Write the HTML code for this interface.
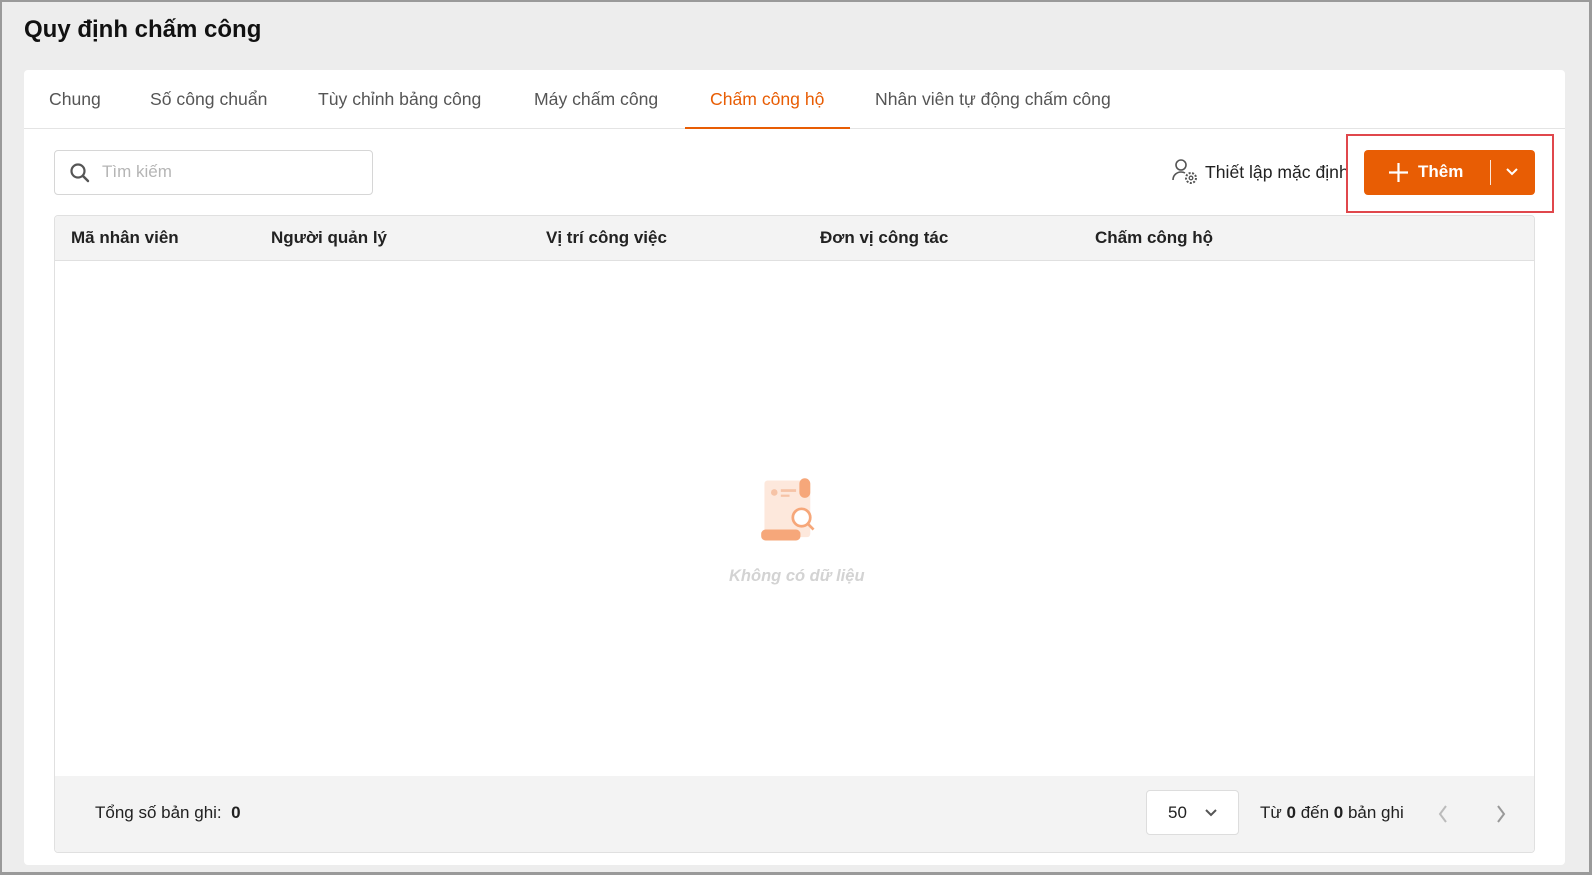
<!DOCTYPE html>
<html><head><meta charset="utf-8"><style>
*{box-sizing:border-box;margin:0;padding:0}
body{width:1592px;height:875px;overflow:hidden;background:#ededed;font-family:"Liberation Sans",sans-serif;color:#212121;position:relative}
.frame{position:absolute;left:0;top:0;width:1592px;height:875px;border:2px solid #9a9a9a;border-right-width:3px;border-bottom-width:3px}
.abs{position:absolute;white-space:nowrap}
.title{left:24px;top:16px;font-size:24px;font-weight:bold;color:#111}
.panel{position:absolute;left:24px;top:70px;width:1541px;height:795px;background:#fff;border-radius:4px}
.tabline{position:absolute;left:24px;top:128px;width:1541px;height:1px;background:#e4e4e4}
.tab{font-size:17.6px;color:#555;top:89px}
.search{position:absolute;left:54px;top:150px;width:319px;height:45px;border:1px solid #d6d6d6;border-radius:4px}
.btn{position:absolute;left:1364px;top:150px;width:171px;height:45px;background:#e85d04;border-radius:4px;color:#fff}
.red{position:absolute;left:1346px;top:134px;width:208px;height:79px;border:2px solid #e0474c}
.table{position:absolute;left:54px;top:215px;width:1481px;height:638px;border:1px solid #e0e0e0;border-radius:4px;overflow:hidden;background:#fff}
.th{position:absolute;top:0;left:0;right:0;height:45px;background:#f3f3f3;border-bottom:1px solid #e0e0e0}
.th span{position:absolute;top:12px;font-size:17px;font-weight:bold;color:#222}
.foot{position:absolute;left:0;right:0;bottom:0;height:76px;background:#f3f3f3}
</style></head><body>
<div class="frame"></div>
<div class="abs title">Quy định chấm công</div>
<div class="panel"></div>
<div class="tabline"></div>
<div class="abs tab" style="left:49px">Chung</div>
<div class="abs tab" style="left:150px">Số công chuẩn</div>
<div class="abs tab" style="left:318px">Tùy chỉnh bảng công</div>
<div class="abs tab" style="left:534px">Máy chấm công</div>
<div class="abs tab" style="left:710px;color:#e85d04">Chấm công hộ</div>
<div class="abs" style="left:685px;top:127px;width:165px;height:2px;background:#e85d04"></div>
<div class="abs tab" style="left:875px">Nhân viên tự động chấm công</div>

<div class="search">
<svg style="position:absolute;left:14px;top:11px" width="22" height="22" viewBox="0 0 22 22"><circle cx="9" cy="9" r="6.5" fill="none" stroke="#555" stroke-width="2.2"/><path d="M14 14l5 5" stroke="#555" stroke-width="2.4" stroke-linecap="round"/></svg>
<div class="abs" style="left:47px;top:11px;font-size:17px;color:#b5b5b5">Tìm kiếm</div>
</div>

<svg class="abs" style="left:1171px;top:158px" width="30" height="28" viewBox="0 0 30 28"><circle cx="10" cy="7" r="5" fill="none" stroke="#555" stroke-width="1.6"/><path d="M2 22c0-5 4-8 8-8 2 0 3 .4 4 1" fill="none" stroke="#555" stroke-width="1.6"/><circle cx="20" cy="20" r="5" fill="none" stroke="#555" stroke-width="2" stroke-dasharray="2 1.5"/><circle cx="20" cy="20" r="1.8" fill="none" stroke="#555" stroke-width="1.3"/></svg>
<div class="abs" style="left:1205px;top:162px;font-size:17.6px;color:#222">Thiết lập mặc định</div>

<div class="btn">
<svg style="position:absolute;left:24px;top:12px" width="21" height="21" viewBox="0 0 21 21"><path d="M10.5 1v19M1 10.5h19" stroke="#fff" stroke-width="2.2"/></svg>
<div class="abs" style="left:54px;top:12px;font-size:17px;font-weight:bold">Thêm</div>
<div class="abs" style="left:126px;top:10px;width:1px;height:25px;background:#fff;opacity:.85"></div>
<svg style="position:absolute;left:141px;top:16px" width="14" height="12" viewBox="0 0 14 12"><path d="M2 3l5 5 5-5" fill="none" stroke="#fff" stroke-width="2"/></svg>
</div>
<div class="red"></div>

<div class="table">
<div class="th"><span style="left:16px">Mã nhân viên</span><span style="left:216px">Người quản lý</span><span style="left:491px">Vị trí công việc</span><span style="left:765px">Đơn vị công tác</span><span style="left:1040px">Chấm công hộ</span></div>
<svg style="position:absolute;left:704px;top:259px" width="72" height="72" viewBox="0 0 66 66"><rect x="5" y="5" width="42" height="52" rx="3" fill="#fde8dc"/><rect x="37" y="3" width="10" height="18" rx="5" fill="#f6a77a"/><circle cx="14" cy="16" r="3" fill="#f6c3a6"/><rect x="20" y="13" width="14" height="2.5" fill="#f6c3a6"/><rect x="20" y="18" width="8" height="2" fill="#f6c3a6"/><rect x="2" y="50" width="36" height="10" rx="4" fill="#f6a77a"/><circle cx="39" cy="39" r="8" fill="#fff" stroke="#f6a77a" stroke-width="2.5"/><path d="M45 45l5 5" stroke="#f6a77a" stroke-width="2.5"/></svg>
<div class="abs" style="left:674px;top:351px;font-size:16.5px;font-style:italic;font-weight:bold;color:#d3d3d3">Không có dữ liệu</div>
<div class="foot">
<div class="abs" style="left:40px;top:27px;font-size:17px">Tổng số bản ghi:&nbsp; <b>0</b></div>
<div class="abs" style="left:1091px;top:14px;width:93px;height:45px;background:#fff;border:1px solid #ddd;border-radius:4px"><span class="abs" style="left:21px;top:12px;font-size:17px">50</span><svg style="position:absolute;left:57px;top:17px" width="14" height="10" viewBox="0 0 14 10"><path d="M2 2l5 5 5-5" fill="none" stroke="#555" stroke-width="2"/></svg></div>
<div class="abs" style="left:1205px;top:27px;font-size:17px">Từ <b>0</b> đến <b>0</b> bản ghi</div>
<svg style="position:absolute;left:1382px;top:28px" width="12" height="20" viewBox="0 0 12 20"><path d="M9 2L3 10l6 8" fill="none" stroke="#bbb" stroke-width="2"/></svg>
<svg style="position:absolute;left:1440px;top:28px" width="12" height="20" viewBox="0 0 12 20"><path d="M3 2l6 8-6 8" fill="none" stroke="#999" stroke-width="2"/></svg>
</div>
</div>
</body></html>
